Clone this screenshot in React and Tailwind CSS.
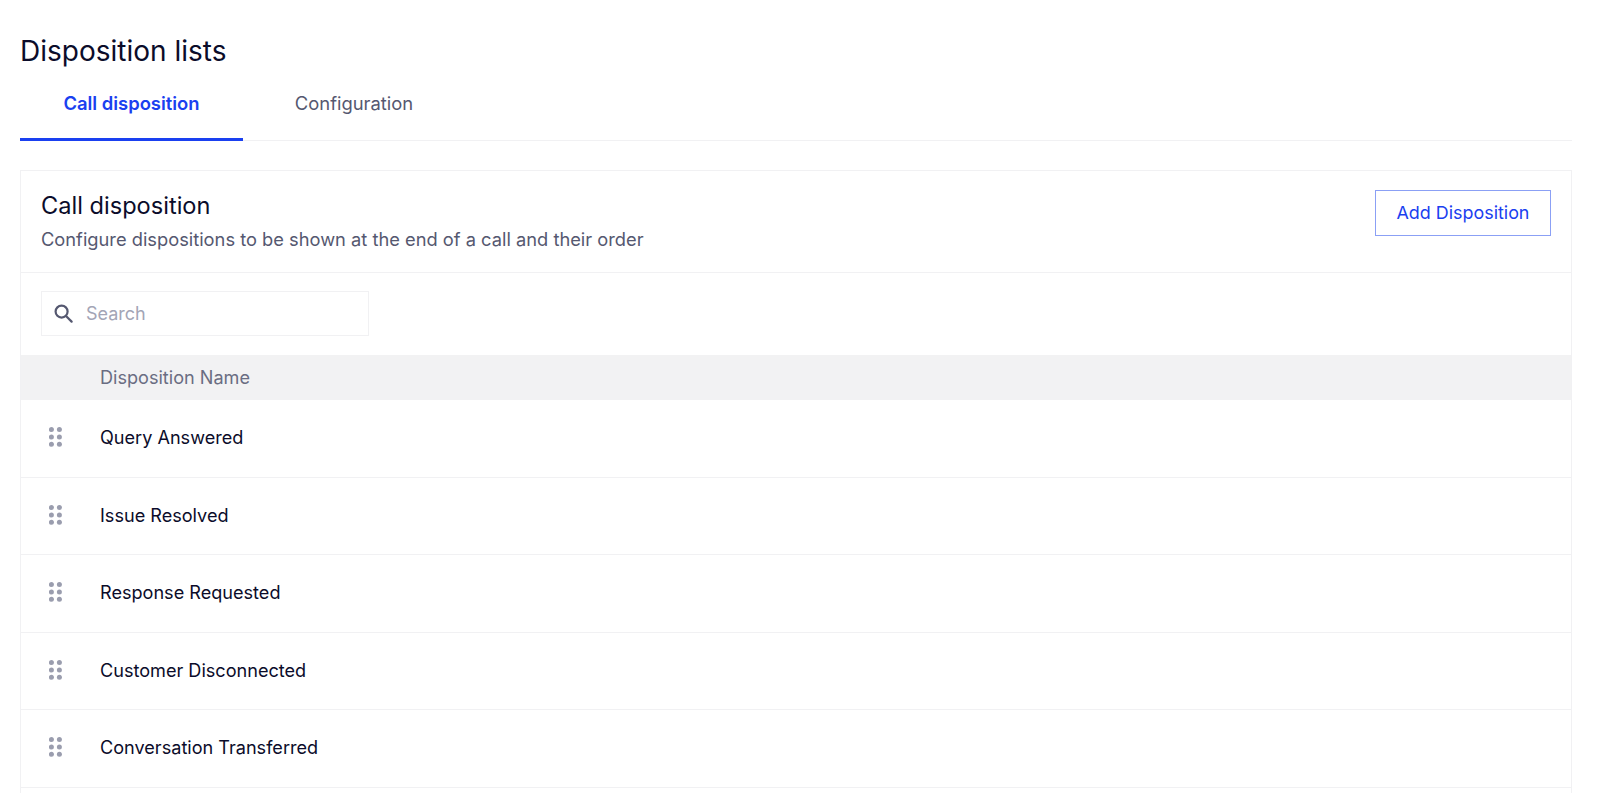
const rows = ["Query Answered", "Issue Resolved", "Response Requested", "Customer Disconnected", "Conversation Transferred"];

function Grip() {
  return (
    <svg width="13" height="20" viewBox="0 0 13 20" className="-mt-[1px] block fill-[#9a9dae]">
      {[2.6, 10, 17.3].map((y) => [2.4, 10.4].map((x) => <circle key={`${y}-${x}`} cx={x} cy={y} r="2.5" />))}
    </svg>
  );
}

export default function App() {
  return (
    <div className="h-[793px] overflow-hidden bg-white font-['Inter',sans-serif] text-[#0b0c2a]">
      <div className="ml-[20px] w-[1552px]">
        <h1 className="pt-[33px] text-[28px] leading-[36px]">Disposition lists</h1>
        <div className="flex h-[72px] border-b border-[#f1f1f3]">
          <div className="flex h-[72px] w-[223px] items-center justify-center border-b-[3px] border-[#1a40f0] text-[18.4px] font-semibold text-[#1a40f0]">Call disposition</div>
          <div className="flex h-[71px] w-[222px] items-center justify-center pb-[2px] text-[18.4px] text-[#555870]">Configuration</div>
        </div>
        <div className="mt-[29px] h-[700px] border border-[#f1f1f3]">
          <div className="flex h-[102px] items-start justify-between border-b border-[#f1f1f3] pl-[20px] pr-[20px]">
            <div className="pt-[21px]">
              <div className="text-[23.6px] leading-[28px]">Call disposition</div>
              <div className="mt-[7px] text-[18.3px] leading-[24px] text-[#555870]">Configure dispositions to be shown at the end of a call and their order</div>
            </div>
            <button className="mt-[19px] h-[46px] w-[176px] border border-[#8ba0f5] text-[17.9px] text-[#1a40f0]">Add Disposition</button>
          </div>
          <div className="pl-[20px] pt-[18px]">
            <div className="flex h-[45px] w-[328px] items-center gap-[13px] border border-[#f1f1f3] pl-[12px]">
              <svg width="19" height="19" viewBox="0 0 19 19" fill="none" stroke="#555870" strokeWidth="2.2" strokeLinecap="round">
                <circle cx="7.6" cy="7.6" r="6" />
                <path d="M12 12l5.6 5.6" />
              </svg>
              <span className="text-[18px] text-[#a3a5b6]">Search</span>
            </div>
          </div>
          <div className="mt-[19px] flex h-[45px] items-center bg-[#f2f2f3] pl-[79px] text-[18.1px] text-[#6a6d82]">Disposition Name</div>
          {rows.map((r) => (
            <div key={r} className="flex h-[77.55px] items-center border-b border-[#f1f1f3] pb-[1px]">
              <div className="ml-[28px] w-[51px]"><Grip /></div>
              <span className="text-[18.1px]">{r}</span>
            </div>
          ))}
        </div>
      </div>
    </div>
  );
}
